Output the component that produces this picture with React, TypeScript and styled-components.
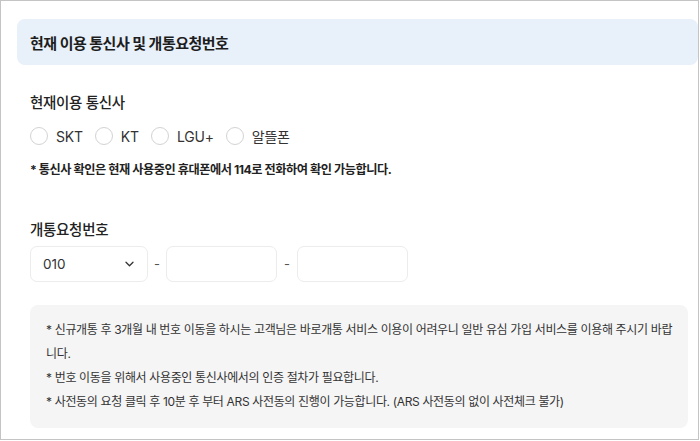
import { createGlobalStyle } from "styled-components";
import styled from "styled-components";

const GlobalStyle = createGlobalStyle`
  html, body {
    margin: 0;
    padding: 0;
    background: #fff;
  }
  body {
    font-family: Inter, "Noto Sans CJK KR", sans-serif;
    color: #222;
  }
`;

const Frame = styled.div`
  width: 699px;
  height: 440px;
  box-sizing: border-box;
  border: 1px solid #c4c4c4;
  padding: 18px 0 0 16px;
  overflow: hidden;
`;

const SectionHead = styled.div`
  height: 46px;
  background: #e8f0fa;
  border-radius: 8px;
  display: flex;
  align-items: center;
  padding-left: 13px;
  font-size: 15px;
  font-weight: 700;
  color: #1d1d1d;
  letter-spacing: -0.5px;
`;

const Body = styled.div`
  padding: 0 10px 0 13px;
`;

const Label = styled.div<{ $top: number }>`
  font-size: 14.5px;
  font-weight: 500;
  color: #222;
  letter-spacing: -0.3px;
  margin-top: ${(p) => p.$top}px;
`;

const RadioRow = styled.div`
  display: flex;
  align-items: center;
  margin-top: 14px;
`;

const RadioItem = styled.label`
  display: flex;
  align-items: center;
  margin-right: 12px;
  font-size: 14px;
  letter-spacing: -0.2px;
  color: #333;
`;

const Circle = styled.span`
  width: 18px;
  height: 18px;
  border-radius: 50%;
  border: 1px solid #d3d3d3;
  box-sizing: border-box;
  margin-right: 8px;
  background: #fff;
`;

const Caution = styled.p`
  margin: 14px 0 0;
  font-size: 12.2px;
  font-weight: 700;
  color: #222;
  letter-spacing: -0.45px;
`;

const PhoneRow = styled.div`
  display: flex;
  align-items: center;
  margin-top: 7px;
`;

const Box = styled.div<{ $w: number }>`
  width: ${(p) => p.$w}px;
  height: 36px;
  box-sizing: border-box;
  border: 1px solid #ececec;
  border-radius: 7px;
  display: flex;
  align-items: center;
  justify-content: space-between;
  padding: 0 13px 0 12px;
  font-size: 13.5px;
  color: #333;
`;

const Dash = styled.span<{ $w: number }>`
  width: ${(p) => p.$w}px;
  text-align: center;
  font-size: 13px;
  color: #555;
`;

const NoteBox = styled.div`
  margin-top: 23px;
  width: 658px;
  box-sizing: border-box;
  background: #f5f5f5;
  border-radius: 8px;
  padding: 13px 12px 14px 16px;
  font-size: 12px;
  line-height: 24px;
  color: #333;
  letter-spacing: -0.35px;
  word-break: break-all;
`;

const Line = styled.div``;

const carriers = ["SKT", "KT", "LGU+", "알뜰폰"];

export default function App() {
  return (
    <>
      <GlobalStyle />
      <Frame>
        <SectionHead>현재 이용 통신사 및 개통요청번호</SectionHead>
        <Body>
          <Label $top={26}>현재이용 통신사</Label>
          <RadioRow>
            {carriers.map((c) => (
              <RadioItem key={c}>
                <Circle />
                {c}
              </RadioItem>
            ))}
          </RadioRow>
          <Caution>* 통신사 확인은 현재 사용중인 휴대폰에서 114로 전화하여 확인 가능합니다.</Caution>
          <Label $top={40}>개통요청번호</Label>
          <PhoneRow>
            <Box $w={118}>
              010
              <svg width="9" height="6" viewBox="0 0 9 6" fill="none">
                <path d="M1 1.2l3.5 3.5 3.5-3.5" stroke="#333" strokeWidth="1.3" strokeLinecap="round" strokeLinejoin="round" />
              </svg>
            </Box>
            <Dash $w={18}>-</Dash>
            <Box $w={111} />
            <Dash $w={20}>-</Dash>
            <Box $w={111} />
          </PhoneRow>
          <NoteBox>
            <Line>* 신규개통 후 3개월 내 번호 이동을 하시는 고객님은 바로개통 서비스 이용이 어려우니 일반 유심 가입 서비스를 이용해 주시기 바랍니다.</Line>
            <Line>* 번호 이동을 위해서 사용중인 통신사에서의 인증 절차가 필요합니다.</Line>
            <Line>* 사전동의 요청 클릭 후 10분 후 부터 ARS 사전동의 진행이 가능합니다. (ARS 사전동의 없이 사전체크 불가)</Line>
          </NoteBox>
        </Body>
      </Frame>
    </>
  );
}
